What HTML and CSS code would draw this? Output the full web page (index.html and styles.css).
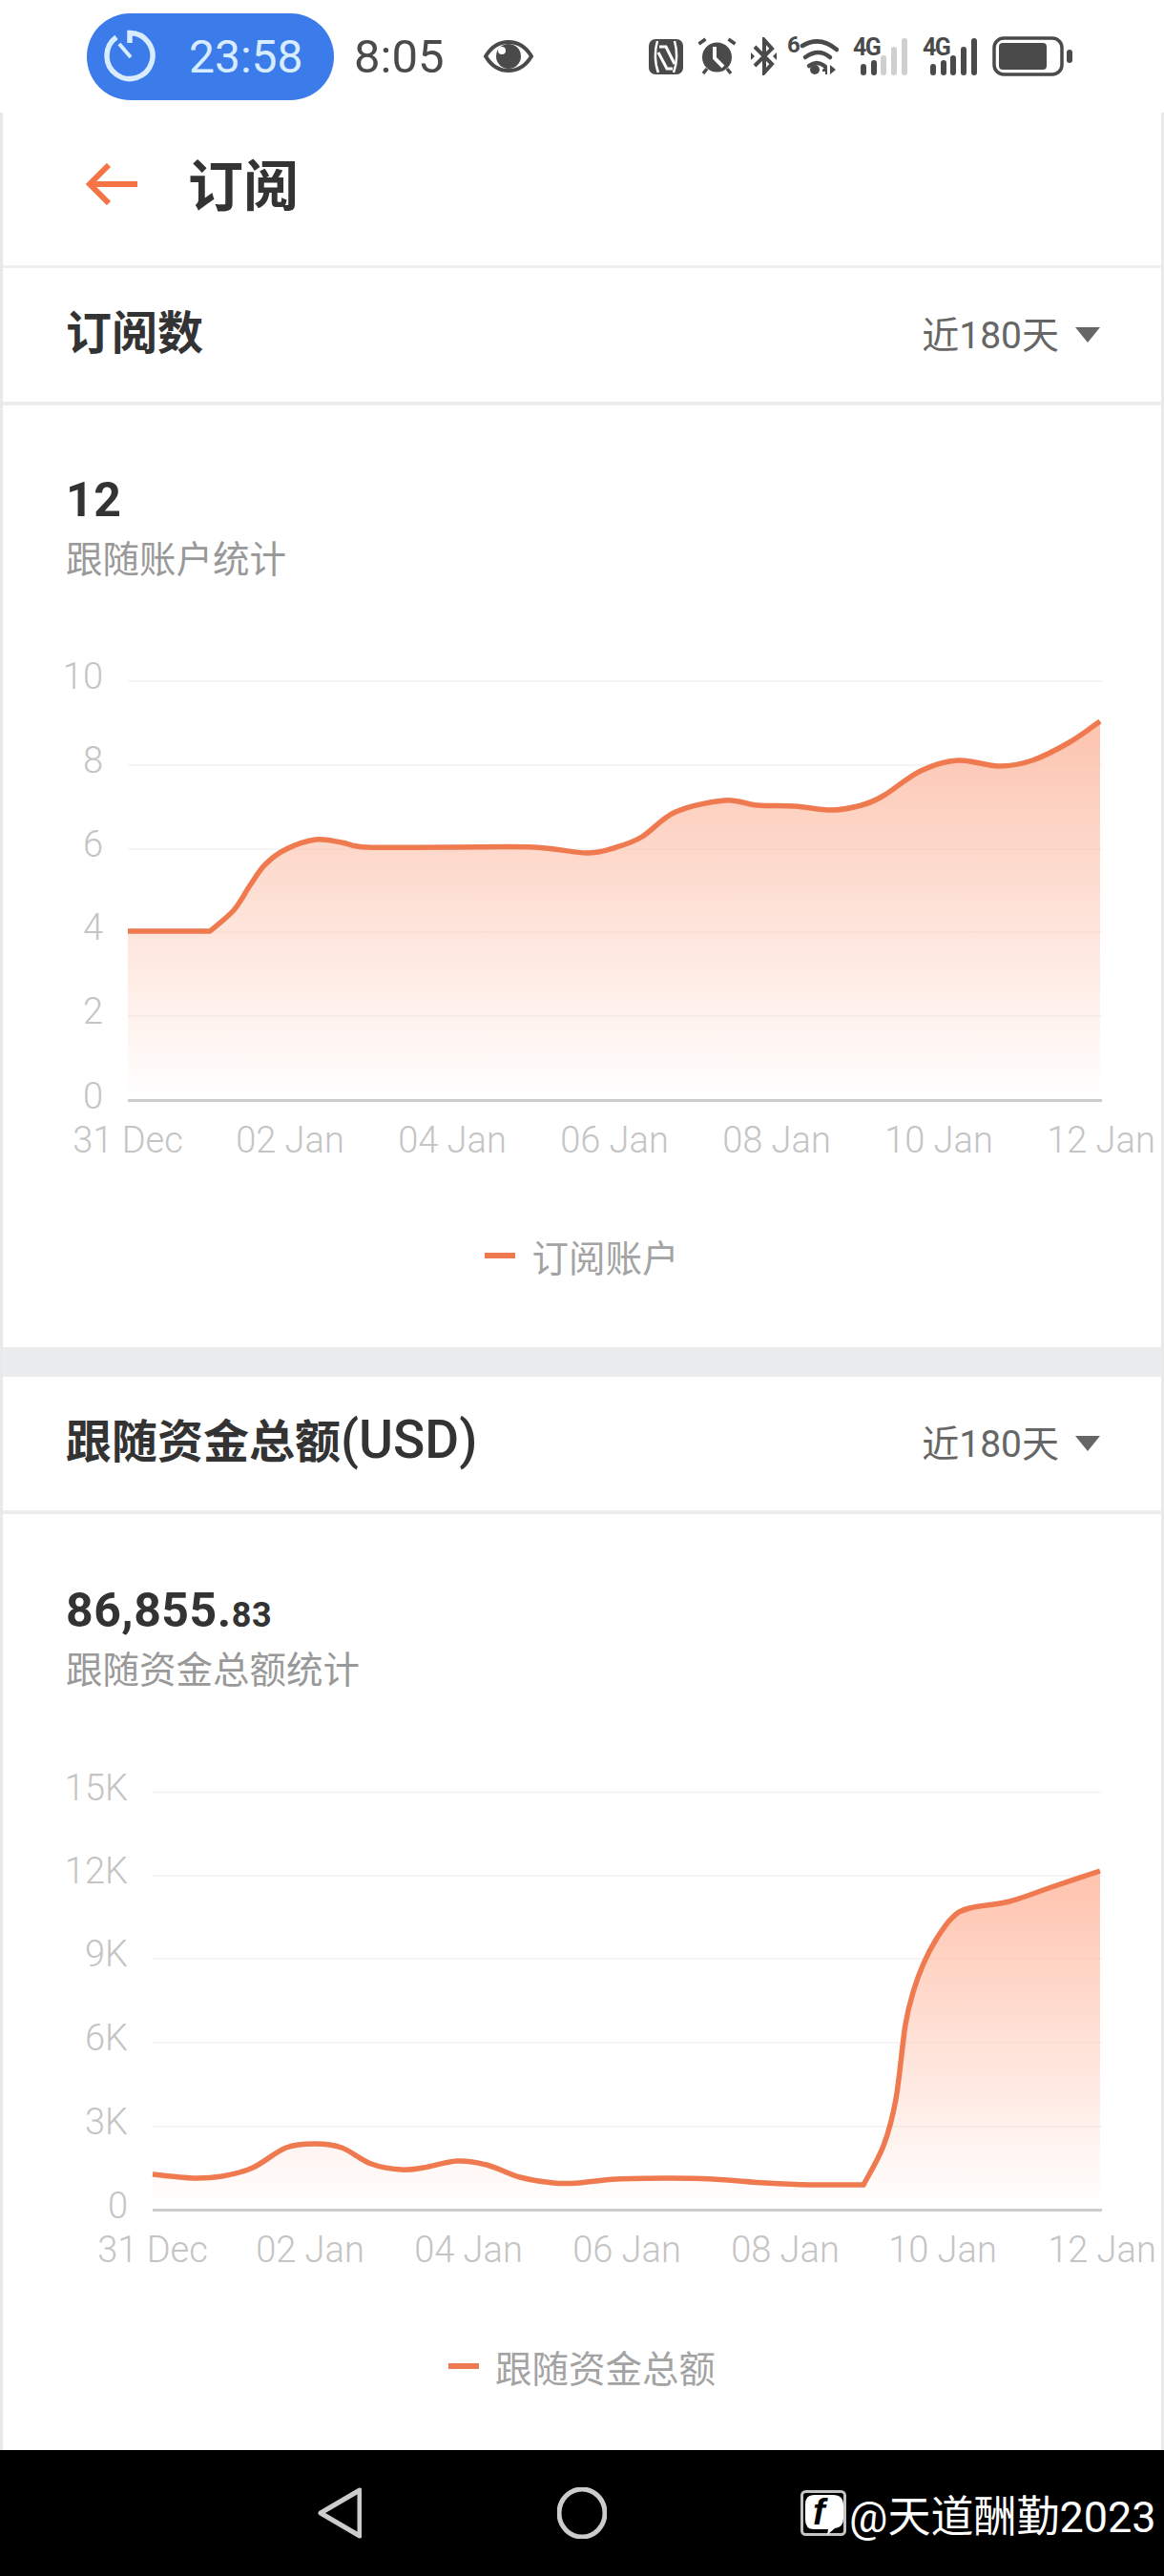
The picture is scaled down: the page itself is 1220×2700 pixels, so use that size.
FILE: index.html
```html
<!DOCTYPE html>
<html lang="zh-CN">
<head>
    <meta charset="UTF-8">
    <meta name="viewport" content="width=device-width, initial-scale=1.0">
    <title>订阅</title>
    <link rel="stylesheet" href="styles.css">
</head>
<body>
    <div class="statusbar">
        <div class="timer-pill">
            <svg class="timer-icon" width="54" height="56" viewBox="0 0 54 56">
                <path d="M27 14V3.5A24 24 0 1 1 13 8" fill="none" stroke="#d7ecff" stroke-width="5.5"/>
                <path d="M16 15L28 29" fill="none" stroke="#d7ecff" stroke-width="4"/>
            </svg>
            <span>23:58</span>
        </div>
        <span class="clock">8:05</span>
        <svg class="eye" width="52" height="36" viewBox="0 0 52 36">
            <path d="M2 18C14 -2 38 -2 50 18C38 38 14 38 2 18Z" fill="none" stroke="#4a4a4a" stroke-width="4"/>
            <circle cx="26" cy="18" r="13" fill="#4a4a4a"/>
            <circle cx="19" cy="12" r="4" fill="#fff"/>
        </svg>

        <div class="status-icons">
            <svg width="36" height="37" viewBox="0 0 36 37">
                <rect width="36" height="37" rx="7" fill="#4a4a4a"/>
                <path d="M9 2C6 12 6 25 10 35M27 2C30 12 30 25 26 35" fill="none" stroke="#fff" stroke-width="2.5"/>
                <path d="M11 8H18L27 26M10 14L19 31H25" fill="none" stroke="#fff" stroke-width="3"/>
            </svg>
            <svg width="41" height="40" viewBox="0 0 41 40">
                <circle cx="20.5" cy="21" r="15.5" fill="#4a4a4a"/>
                <path d="M1.5 7L8.5 2M39.5 7L32.5 2M6 38L10 33M35 38L31 33" fill="none" stroke="#4a4a4a" stroke-width="3.5"/>
                <path d="M18 10V22L27 31" fill="none" stroke="#fff" stroke-width="4"/>
            </svg>
            <svg width="27" height="40" viewBox="0 0 27 40">
                <path d="M4 10L22 28L14 37V3L22 12L4 30" fill="none" stroke="#4a4a4a" stroke-width="4"/>
                <path d="M0 16L4 20L0 24ZM27 16L23 20L27 24Z" fill="#4a4a4a"/>
            </svg>
            <svg class="ic-wifi" width="54" height="54" viewBox="0 -6 54 54">
                <text class="ic-text" x="0" y="17" font-size="24">6</text>
                <g fill="none" stroke="#4a4a4a" stroke-width="4.5" stroke-linecap="round">
                    <path d="M16 10Q34 -1 52 14"/>
                    <path d="M19 22Q33 12 45 22"/>
                    <path d="M23 31Q31 25 39 31"/>
                </g>
                <circle cx="29" cy="35" r="5" fill="#4a4a4a"/>
                <path d="M37 35L42 30V40H40V37H37ZM45 30L51 35L45 40Z" fill="#4a4a4a"/>
            </svg>
            <svg width="58" height="54" viewBox="0 -6 58 54">
                <text class="ic-text ic-4g" x="0" y="20" font-size="25">4G</text>
                <g fill="none" stroke-width="6" stroke-linecap="round">
                    <path d="M11 32V38M22 28V38" stroke="#4a4a4a"/>
                    <path d="M32 23V38M43 14V38M54 5V38" stroke="#cfcfcf"/>
                </g>
            </svg>
            <svg width="58" height="54" viewBox="0 -6 58 54">
                <text class="ic-text ic-4g" x="0" y="20" font-size="25">4G</text>
                <path d="M11 32V38M22 28V38M32 23V38M43 14V38M54 5V38" fill="none" stroke="#4a4a4a" stroke-width="6" stroke-linecap="round"/>
            </svg>
            <svg width="84" height="42" viewBox="0 0 84 42">
                <rect x="2" y="2" width="71" height="38" rx="10" fill="none" stroke="#4a4a4a" stroke-width="3.5"/>
                <rect x="7" y="7" width="50" height="28" rx="4" fill="#4a4a4a"/>
                <rect x="78" y="14" width="6" height="14" rx="3" fill="#4a4a4a"/>
            </svg>
        </div>
    </div>

    <div class="sheet">
        <header class="topbar">
            <svg class="back" width="54" height="44" viewBox="0 0 54 44">
                <path d="M54 22H5M24 2L4 22L24 42" fill="none" stroke="#f47445" stroke-width="6"/>
            </svg>
            <h1>订阅</h1>
        </header>

        <section class="card">
            <div class="card-head">
                <h2>订阅数</h2>
                <div class="range">近180天<i class="caret"></i></div>
            </div>
            <div class="card-body">
                <div class="stat">12</div>
                <div class="stat-label">跟随账户统计</div>
                <svg class="chart" id="chart-subs" width="1214" height="560"></svg>
                <div class="legend"><i class="legend-dash"></i>订阅账户</div>
            </div>
        </section>

        <div class="divider"></div>

        <section class="card card-funds">
            <div class="card-head">
                <h2>跟随资金总额<span class="unit">(USD)</span></h2>
                <div class="range">近180天<i class="caret"></i></div>
            </div>
            <div class="card-body">
                <div class="stat">86,855.<small>83</small></div>
                <div class="stat-label">跟随资金总额统计</div>
                <svg class="chart" id="chart-funds" width="1214" height="560"></svg>
                <div class="legend"><i class="legend-dash"></i>跟随资金总额</div>
            </div>
        </section>
    </div>

    <div class="navbar">
        <svg class="nav-back" width="46" height="54" viewBox="0 0 46 54">
            <path d="M44 3V51L3 27Z" fill="none" stroke="#ccc" stroke-width="5" stroke-linejoin="round"/>
        </svg>
        <svg class="nav-home" width="52" height="54" viewBox="0 0 52 54">
            <ellipse cx="26" cy="27" rx="24" ry="25" fill="none" stroke="#ccc" stroke-width="5"/>
        </svg>
        <div class="watermark">
            <svg width="48" height="48" viewBox="0 0 48 48">
                <rect x="1.5" y="1.5" width="45" height="45" rx="4" fill="#000" stroke="#c4c4c4" stroke-width="3"/>
                <path d="M14 5H34Q45 5 45 16V30Q45 39 36 40L28 47L29 41H14Q5 41 5 31V15Q5 5 14 5Z" fill="#fff"/>
                <text class="wm-f" x="13" y="36" font-size="38">f</text>
            </svg>
            <span>@天道酬勤2023</span>
        </div>
    </div>

    <script src="chart.js"></script>
</body>
</html>
```

FILE: styles.css
```css
* { box-sizing: border-box; }
html, body { margin: 0; padding: 0; }
body { width: 1220px; height: 2700px; overflow: hidden; background: #fff; font-family: Roboto, "Noto Sans CJK SC", sans-serif; display: flex; flex-direction: column; }

.statusbar { height: 118px; display: flex; align-items: center; padding: 0 96px 0 91px; color: #4a4a4a; }
.timer-pill { width: 259px; height: 91px; border-radius: 46px; background: #3b7bea; color: #d7ecff; display: flex; align-items: center; padding-left: 18px; font-size: 48px; }
.timer-pill span { margin-left: 35px; }
.clock { margin-left: 21px; font-size: 49px; }
.eye { margin-left: 42px; }
.status-icons { margin-left: auto; display: flex; align-items: center; gap: 15px; }
.ic-wifi { margin-left: -4px; }
.ic-text { font-family: Roboto, sans-serif; font-weight: 700; fill: #4a4a4a; }
.ic-4g { letter-spacing: -1.5px; }

.sheet { flex: 1; display: flex; flex-direction: column; border-left: 3px solid #e9e9e9; border-right: 3px solid #e9e9e9; }
.topbar { height: 163px; flex: none; display: flex; align-items: center; padding-left: 87px; border-bottom: 3px solid #eeeeee; }
.topbar h1 { margin: -14px 0 0 53px; font-size: 58px; font-weight: 700; color: #333; font-family: "Noto Sans CJK SC", sans-serif; }
.back { margin-top: -10px; }

.card-head { height: 144px; display: flex; align-items: center; justify-content: space-between; padding: 0 64px 0 66px; border-bottom: 4px solid #ececec; }
.card-head h2 { margin: -13px 0 0; font-size: 48px; font-weight: 700; color: #333; font-family: Roboto, "Noto Sans CJK SC", sans-serif; }
.card-head .unit { font-size: 55px; font-weight: 500; }
.range { margin-top: -6px; display: flex; align-items: center; font-size: 39px; color: #666; }
.caret { margin: 6px 0 0 17px; width: 0; height: 0; border-left: 13px solid transparent; border-right: 13px solid transparent; border-top: 16px solid #666; }

.card-body { padding: 75px 0 71px; }
.card-funds { flex: 1; }
.card-funds .card-body { padding: 77px 0 0; }
.stat { height: 48px; line-height: 48px; padding-left: 66px; font-size: 50px; font-weight: 700; color: #333; letter-spacing: 0.5px; }
.stat small { font-size: 36px; }
.stat-label { height: 50px; line-height: 50px; margin-top: 14px; padding-left: 66px; font-size: 38.5px; color: #999; }

.chart { display: block; margin-top: 68px; }
.chart-label { font-family: Roboto, sans-serif; font-size: 38px; font-weight: 300; fill: #c4c4c4; }
.chart-grid { stroke: #f5f5f5; stroke-width: 2; }
.chart-axis { stroke: #cccccc; stroke-width: 3; }
.chart-line { fill: none; stroke: #ef7a50; stroke-width: 5.5; }

.legend { height: 50px; margin-top: 51px; display: flex; align-items: center; justify-content: center; font-size: 38.5px; color: #a3a3a3; }
.legend-dash { width: 32px; height: 6px; margin-right: 17px; background: #ef7a50; }

.divider { height: 31px; flex: none; background: #ebeced; }

.navbar { height: 132px; flex: none; background: #000; display: flex; align-items: center; padding: 0 0 0 333px; color: #fff; }
.nav-home { margin-left: 205px; }
.watermark { margin-left: 203px; display: flex; align-items: center; font-size: 45px; }
.watermark span { margin-left: 3px; }
.wm-f { font-family: "Liberation Sans", sans-serif; font-weight: 700; font-style: italic; fill: #000; }
```

FILE: chart.js
```js
// Courbes relevées en pixels de page, une "run" par segment lisse
var charts = [
    {
        id: 'chart-subs',
        top: 680,
        gridX: 134,
        gridY: [714, 802, 890, 977, 1065, 1153.5],
        yLabels: ['10', '8', '6', '4', '2', '0'],
        xLabels: [134, 304, 474, 644, 814, 984, 1154],
        fillTop: '#fcc4af',
        runs: [
            [[134, 976], [220, 976]],
            [[220, 976], [245, 954], [262, 928], [278, 906], [300, 890], [331, 880], [358, 883], [385, 888], [470, 888], [560, 888],
             [615, 894], [646, 888], [673, 877], [708, 851], [759, 839], [794, 844], [833, 845], [872, 849], [903, 844],
             [926, 834], [965, 808], [1004, 797], [1047, 803], [1082, 797], [1121, 778], [1153, 756]]
        ]
    },
    {
        id: 'chart-funds',
        top: 1844,
        gridX: 160,
        gridY: [1878.5, 1966, 2053, 2141, 2229, 2316.5],
        yLabels: ['15K', '12K', '9K', '6K', '3K', '0'],
        xLabels: [160, 325, 491, 657, 823, 988, 1155],
        fillTop: '#ffc3ae',
        runs: [
            [[160, 2279], [202, 2283], [233, 2281], [265, 2272], [300, 2251], [331, 2247], [358, 2251], [389, 2268],
             [420, 2274], [444, 2272], [479, 2265], [510, 2269], [545, 2282], [580, 2288], [607, 2288], [646, 2284],
             [700, 2283], [747, 2284], [802, 2288], [848, 2290], [905, 2290]],
            [[905, 2290], [926, 2249], [939, 2200], [949, 2122], [958, 2085], [968, 2058], [981, 2033], [998, 2010], [1016, 2000],
             [1058, 1993], [1105, 1977], [1153, 1961]]
        ]
    }
];

var dayNames = ['31 Dec', '02 Jan', '04 Jan', '06 Jan', '08 Jan', '10 Jan', '12 Jan'];
var NS = 'http://www.w3.org/2000/svg';

function add(svg, tag, attrs, text) {
    var el = document.createElementNS(NS, tag);
    for (var key in attrs) el.setAttribute(key, attrs[key]);
    if (text) el.textContent = text;
    svg.appendChild(el);
    return el;
}

// Catmull-Rom vers bézier
function smooth(points) {
    var d = '';
    for (var i = 0; i < points.length - 1; i++) {
        var p0 = points[i - 1] || points[i];
        var p1 = points[i];
        var p2 = points[i + 1];
        var p3 = points[i + 2] || p2;
        d += ' C' + (p1[0] + (p2[0] - p0[0]) / 6).toFixed(1) + ' ' + (p1[1] + (p2[1] - p0[1]) / 6).toFixed(1) +
             ' ' + (p2[0] - (p3[0] - p1[0]) / 6).toFixed(1) + ' ' + (p2[1] - (p3[1] - p1[1]) / 6).toFixed(1) +
             ' ' + p2[0] + ' ' + p2[1];
    }
    return d;
}

charts.forEach(function (c) {
    var svg = document.getElementById(c.id);
    svg.setAttribute('viewBox', '3 ' + c.top + ' 1214 560');

    var axisY = c.gridY[c.gridY.length - 1];
    var first = c.runs[0][0];
    var line = 'M' + first[0] + ' ' + first[1] + c.runs.map(smooth).join('');
    var lastRun = c.runs[c.runs.length - 1];
    var last = lastRun[lastRun.length - 1];

    var defs = add(svg, 'defs', {});
    var grad = add(defs, 'linearGradient', { id: c.id + '-fill', x1: 0, y1: 0, x2: 0, y2: 1 });
    add(grad, 'stop', { offset: '0', 'stop-color': c.fillTop });
    add(grad, 'stop', { offset: '1', 'stop-color': c.fillTop, 'stop-opacity': 0 });

    c.gridY.forEach(function (y, i) {
        var isAxis = i === c.gridY.length - 1;
        add(svg, 'line', { x1: c.gridX, x2: 1155, y1: y, y2: y, 'class': isAxis ? 'chart-axis' : 'chart-grid' });
        add(svg, 'text', { x: c.gridX - 26, y: y + 8, 'text-anchor': 'end', 'class': 'chart-label' }, c.yLabels[i]);
    });

    add(svg, 'path', { d: line + ' L' + last[0] + ' ' + (axisY - 2) + ' L' + first[0] + ' ' + (axisY - 2) + 'Z', fill: 'url(#' + c.id + '-fill)' });
    add(svg, 'path', { d: line, 'class': 'chart-line' });

    c.xLabels.forEach(function (x, i) {
        add(svg, 'text', { x: x, y: axisY + 54, 'text-anchor': 'middle', 'class': 'chart-label' }, dayNames[i]);
    });
});
```
